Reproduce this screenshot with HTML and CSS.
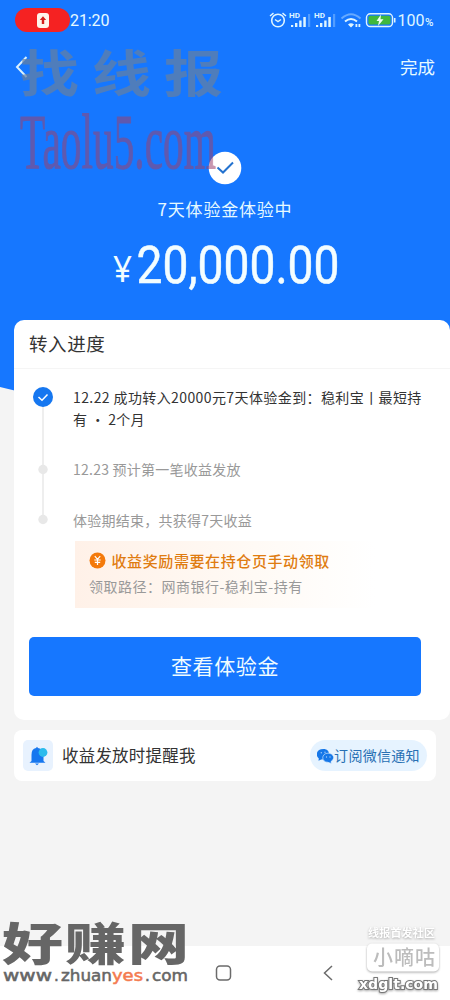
FILE: index.html
```html
<!DOCTYPE html>
<html lang="zh-CN">
<head>
<meta charset="utf-8">
<title>体验金</title>
<link rel="stylesheet" href="styles.css">
</head>
<body>
<div class="page">
  <svg class="curve" viewBox="0 0 450 100" width="450" height="100"><path d="M0 0H450V67Q225 125 0 67Z" fill="#1677ff"/></svg>
  <header class="hero">
    <div class="status">
      <span class="record"><svg width="12" height="15" viewBox="0 0 12 15"><rect width="12" height="15" rx="3" fill="#fff5eb"/><path d="M6 3.3L9.2 7H7.2V11H4.8V7H2.8Z" fill="#d4201c"/></svg></span>
      <span class="clock">21:20</span>
      <svg class="status-icons" width="168" height="20" viewBox="0 0 168 20" fill="none" stroke="#dff5ff">
        <circle cx="11" cy="10.500" r="6.300" stroke-width="1.600"/><path d="M3 6L6.500 3.200M15.500 3.200L19 6M8 9.500L11 11.500L14 9.500" stroke-width="1.500"/>
        <g fill="#dff5ff" stroke="none">
          <text x="22" y="8" class="hd" textLength="11" lengthAdjust="spacingAndGlyphs">HD</text><path d="M24 15h2.200v2h-2.200zM28 13h2.400v4h-2.400zM32.200 10.500h2.400v6.500h-2.400zM36.300 7h2.500v10h-2.500z"/><path d="M41 4h2.200v13h-2.200z" opacity=".3"/>
          <text x="47" y="8" class="hd" textLength="11" lengthAdjust="spacingAndGlyphs">HD</text><path d="M49 15h2.200v2h-2.200zM53 13h2.400v4h-2.400zM57.200 10.500h2.400v6.500h-2.400zM61.300 7h2.500v10h-2.500z"/><path d="M66 4h2.200v13h-2.200z" opacity=".3"/>
          <path d="M81 14.500Q84 12 87 14.500L84 17.500ZM88.500 14h1.800v3h-1.800zM91.500 14h1.800v3h-1.800z"/>
        </g>
        <path d="M74.500 8.500Q84 0 93.500 8.500" opacity=".4" stroke-width="2"/><path d="M78 11.500Q84 6.500 90 11.500" stroke-width="2"/>
        <rect x="99.500" y="3.800" width="26" height="12.700" rx="3.800" stroke-width="1.400"/><rect x="101.500" y="5.800" width="22" height="8.700" rx="1.800" fill="#40b83d" stroke="none"/><path d="M127.700 8v4.500" stroke-width="1.600"/><path d="M114 4.500L109.500 11H112L111 16L116.500 9.300H113.500Z" fill="#eefff2" stroke="none"/>
        <text x="130.500" y="16" class="battery" textLength="27" lengthAdjust="spacingAndGlyphs">100</text><text x="158" y="16" class="percent" textLength="8.500" lengthAdjust="spacingAndGlyphs">%</text>
      </svg>
    </div>
    <nav class="nav">
      <svg width="14" height="22" viewBox="0 0 14 22"><path d="M11.500 1L2 11L11.500 21" fill="none" stroke="#d9f1ff" stroke-width="2"/></svg>
      <span>完成</span>
    </nav>
    <svg class="check" width="34" height="34" viewBox="0 0 34 34"><circle cx="17" cy="17" r="16.300" fill="#fff"/><path d="M9.500 16.500L15 21.500L25 11.500" fill="none" stroke="#2372cf" stroke-width="2"/></svg>
    <div class="hero-label">7天体验金体验中</div>
    <svg class="amount" width="226" height="48" viewBox="0 0 226 48"><text x="1" y="40" class="yen" textLength="19" lengthAdjust="spacingAndGlyphs">¥</text><text x="24.500" y="40.500" class="sum" textLength="203" lengthAdjust="spacingAndGlyphs">20,000.00</text></svg>
  </header>

  <main>
    <section class="card">
      <h1>转入进度</h1>
      <div class="timeline">
        <svg class="rail" width="22" height="140" viewBox="0 0 22 140"><path d="M11 20V132" stroke="#e8e8e8" stroke-width="1.500"/><circle cx="11" cy="11" r="10" fill="#1677f0"/><path d="M6.500 11L10 14.200L15.500 8.500" fill="none" stroke="#fff" stroke-width="1.500"/><circle cx="11" cy="83.500" r="4.700" fill="#e8e8e8"/><circle cx="11" cy="133.500" r="4.700" fill="#e8e8e8"/></svg>
        <div class="steps">
          <p class="active"><span class="line-one">12.22 成功转入20000元7天体验金到：稳利宝丨最短持</span><br>有 · 2个月</p>
          <p class="second">12.23 预计第一笔收益发放</p>
          <p class="third">体验期结束，共获得7天收益</p>
          <div class="notice">
            <div class="notice-title"><svg width="17" height="17" viewBox="0 0 17 17"><circle cx="8.500" cy="8.500" r="8" fill="#f47a0b"/><path d="M5.800 4.200L8.500 7.300L11.200 4.200M8.500 7.300V13M5.300 8H11.700M5.800 10.300H11.200" fill="none" stroke="#fff" stroke-width="1.200"/></svg><span>收益奖励需要在持仓页手动领取</span></div>
            <div class="path">领取路径：网商银行-稳利宝-持有</div>
          </div>
        </div>
      </div>
      <div class="button">查看体验金</div>
    </section>
    <section class="reminder">
      <span class="bell"><svg width="20" height="20" viewBox="0 0 20 20"><path d="M3.500 15V9Q3.500 2.500 8 2L9 .8L10 2Q15.500 2.500 15.500 9V15L17.500 16.800H1.500Z" fill="#1677ef"/><path d="M7 17.500H11L9 19.200Z" fill="#1677ef"/><circle cx="15" cy="6.500" r="4.400" fill="#2bbbed"/></svg></span>
      <span class="remind-text">收益发放时提醒我</span>
      <span class="subscribe"><svg width="17" height="16" viewBox="0 0 17 16"><path d="M6.500 1C-1.500 1-1.500 8.500 1.800 10.500L1.500 12.800L4.200 11.500C13 12.500 15 1 6.500 1Z" fill="#1677e8"/><path d="M11 5.200C4 5.200 4 14.300 11 14.300L14.300 15.500L14 13.500C18.800 10.500 16.500 5.200 11 5.200Z" fill="#1677e8" stroke="#e6f3ff" stroke-width=".6"/><g fill="#a6cdf7"><circle cx="4.300" cy="4.800" r=".7"/><circle cx="8" cy="4.300" r=".7"/><circle cx="9.500" cy="9" r=".7"/><circle cx="13" cy="9" r=".7"/></g></svg><span>订阅微信通知</span></span>
    </section>
  </main>

  <footer class="system-bar">
    <svg width="450" height="54" viewBox="0 0 450 54" fill="none" stroke="#6b6b6b"><rect x="216.500" y="20" width="14" height="14" rx="3.500" stroke-width="1.500"/><path d="M332 20L324.500 27L332 34" stroke-width="1.500"/></svg>
  </footer>

  <svg class="overlay" width="450" height="1000" viewBox="0 0 450 1000">
    <text x="20" y="108.500" class="mark-cn" textLength="203" transform="scale(1 .85)">找线报</text>
    <text x="20" y="168" class="mark-en" textLength="196" lengthAdjust="spacingAndGlyphs">Taolu5.com</text>
    <text x="2" y="1282" class="brand" textLength="187" transform="scale(1 .75)">好赚网</text>
    <g class="brand-url"><text x="3" y="981" textLength="49" lengthAdjust="spacingAndGlyphs">www</text><text x="54" y="981">.</text><text x="61" y="981" textLength="51" lengthAdjust="spacingAndGlyphs">zhuan</text><text x="112" y="981" class="orange" textLength="31" lengthAdjust="spacingAndGlyphs">yes</text><text x="145" y="981">.</text><text x="152" y="981" textLength="36" lengthAdjust="spacingAndGlyphs">com</text></g>
    <g class="corner">
      <text x="368" y="937" class="community" textLength="67">线报首发社区</text>
      <rect x="367" y="943.500" width="72" height="28" rx="5" fill="#fff"/>
      <text x="373" y="965" class="corner-name" textLength="62">小嘀咕</text>
      <text x="359" y="989" class="corner-url" textLength="79" lengthAdjust="spacingAndGlyphs">xdglt.com</text>
    </g>
  </svg>
</div>
</body>
</html>
```
FILE: styles.css
```css
* { box-sizing: border-box; }
body { margin: 0; font-family: "Noto Sans CJK SC", "Noto Sans", sans-serif; color: #333; }
.page { position: relative; width: 450px; height: 1000px; overflow: hidden; background: #f4f4f4; display: flex; flex-direction: column; }
.curve { position: absolute; left: 0; top: 320px; }
.hero { height: 320px; flex: none; background: #1677ff; display: flex; flex-direction: column; align-items: center; color: #e6faff; }
.status { width: 100%; height: 40px; display: flex; align-items: center; padding: 0 15px; }
.record { width: 55px; height: 24px; border-radius: 12px; background: #f52222; display: flex; align-items: center; justify-content: center; }
.clock { font: 16px Roboto, sans-serif; letter-spacing: -.1px; }
.status-icons { margin-left: auto; }
.hd { font: bold 7px Roboto, sans-serif; }
.battery { font: 16.500px Roboto, sans-serif; fill: #dff5ff; stroke: none; }
.percent { font: 500 10.500px Roboto, sans-serif; fill: #dff5ff; stroke: none; }
.nav { width: 100%; height: 54px; display: flex; align-items: center; justify-content: space-between; padding: 0 15px; font-size: 17.500px; }
.nav span { position: relative; top: -1px; }
.check { margin-top: 57px; }
.hero-label { margin-top: 10px; height: 27px; line-height: 27px; font-size: 17px; letter-spacing: .8px; }
.amount { margin-top: 20px; overflow: visible; fill: #f3fdff; }
.yen { font: 36px "Noto Sans", sans-serif; }
.sum { font: 400 51.500px Roboto, sans-serif; stroke: #f3fdff; stroke-width: .5px; }
main { position: relative; flex: 1; padding-left: 14px; }
.card { height: 400px; background: #fff; border-radius: 10px; }
h1 { margin: 0; height: 49px; line-height: 47px; padding-left: 15px; font-size: 18.500px; font-weight: 400; letter-spacing: .6px; border-bottom: 1px solid #f5f5f5; }
.timeline { display: flex; padding: 17px 0 0 18px; height: 268px; }
.rail { flex: none; }
.steps { padding-left: 19px; font-size: 14px; line-height: 22px; white-space: nowrap; color: #999; }
.steps p { margin: 0; letter-spacing: .25px; }
.steps .active { color: #333; }
.line-one { letter-spacing: .4px; }
.steps .second { margin-top: 28px; }
.steps .third { margin-top: 29px; }
.notice { margin: 10px 0 0 2px; height: 67px; width: 300px; padding: 7px 0 0 14px; background: linear-gradient(90deg, #fff1e8, #fffaf5 60%, #fff); }
.notice-title { display: flex; align-items: center; gap: 5.500px; height: 25px; color: #df7c10; font-weight: 500; font-size: 15px; letter-spacing: .6px; }
.path { line-height: 26px; letter-spacing: .5px; }
.button { margin-left: 15px; width: 392px; height: 59px; padding-bottom: 3px; border-radius: 5px; background: #1677ff; color: #effcff; display: flex; align-items: center; justify-content: center; font-size: 21px; letter-spacing: .6px; }
.reminder { margin-top: 10px; width: 422px; height: 51px; background: #fff; border-radius: 8px; display: flex; align-items: center; padding: 0 9px; }
.bell { width: 30px; height: 31px; border-radius: 5px; background: #e8f2fe; display: flex; align-items: center; justify-content: center; }
.remind-text { margin-left: 9px; padding-bottom: 2px; font-size: 16.500px; letter-spacing: .2px; }
.subscribe { margin-left: auto; width: 117px; height: 31px; border-radius: 16px; background: #e6f3ff; display: flex; align-items: center; justify-content: center; color: #2870b4; font-size: 14px; letter-spacing: .3px; }
.subscribe span { padding-bottom: 2px; }
.system-bar { height: 54px; background: #fff; }
.overlay { position: absolute; inset: 0; pointer-events: none; }
.mark-cn { font: bold 59px "Noto Sans CJK SC", sans-serif; fill: #68809f; opacity: .7; }
.mark-en { font: 78px "Liberation Serif", serif; fill: #9b426f; stroke: #9b426f; opacity: .55; }
.brand { font: 900 61px "Noto Sans CJK SC", sans-serif; fill: #666; }
.brand-url { font: 15px "DejaVu Sans", sans-serif; fill: #666; stroke: #666; stroke-width: .5px; }
.orange { fill: #f47b50; stroke: #f47b50; }
.community { font: bold 11px "Noto Sans CJK SC", sans-serif; fill: #fff; }
.corner { filter: drop-shadow(0 1px 1px #aaa); }
.corner-name { font: 500 20px "Noto Sans CJK SC", sans-serif; fill: #bcbcbc; }
.corner-url { font: bold 14px "DejaVu Sans", sans-serif; fill: #fff; stroke: #777; stroke-width: 2px; paint-order: stroke; }
```
